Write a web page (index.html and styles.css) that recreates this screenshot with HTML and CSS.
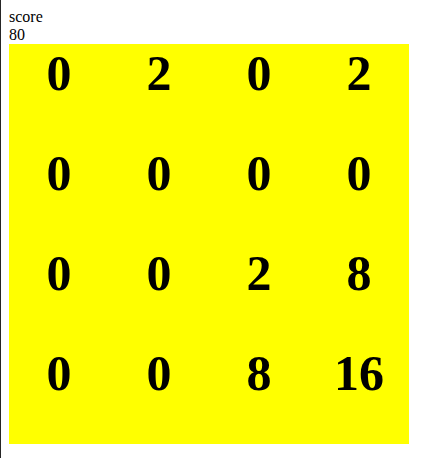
FILE: index.html
```html
<!DOCTYPE html>
<html>
<head>
<meta charset="utf-8">
<link rel="stylesheet" href="styles.css">
</head>
<body>
<div class="score-label">score</div>
<div class="score-value">80</div>
<div class="board">
  <div class="cell">0</div><div class="cell">2</div><div class="cell">0</div><div class="cell">2</div>
  <div class="cell">0</div><div class="cell">0</div><div class="cell">0</div><div class="cell">0</div>
  <div class="cell">0</div><div class="cell">0</div><div class="cell">2</div><div class="cell">8</div>
  <div class="cell">0</div><div class="cell">0</div><div class="cell">8</div><div class="cell">16</div>
</div>
</body>
</html>
```
FILE: styles.css
```css
html {
  border-left: 1px solid #262626;
  background: #fff;
  min-height: 100vh;
  box-sizing: border-box;
}
body {
  margin: 8px;
  font-family: "Liberation Serif", "Times New Roman", serif;
  font-size: 16px;
  color: #000;
}
.board {
  width: 400px;
  height: 400px;
  background: #ffff00;
  display: grid;
  grid-template-columns: repeat(4, 100px);
  grid-template-rows: repeat(4, 100px);
}
.cell {
  font-weight: bold;
  font-size: 50px;
  text-align: center;
}
```
